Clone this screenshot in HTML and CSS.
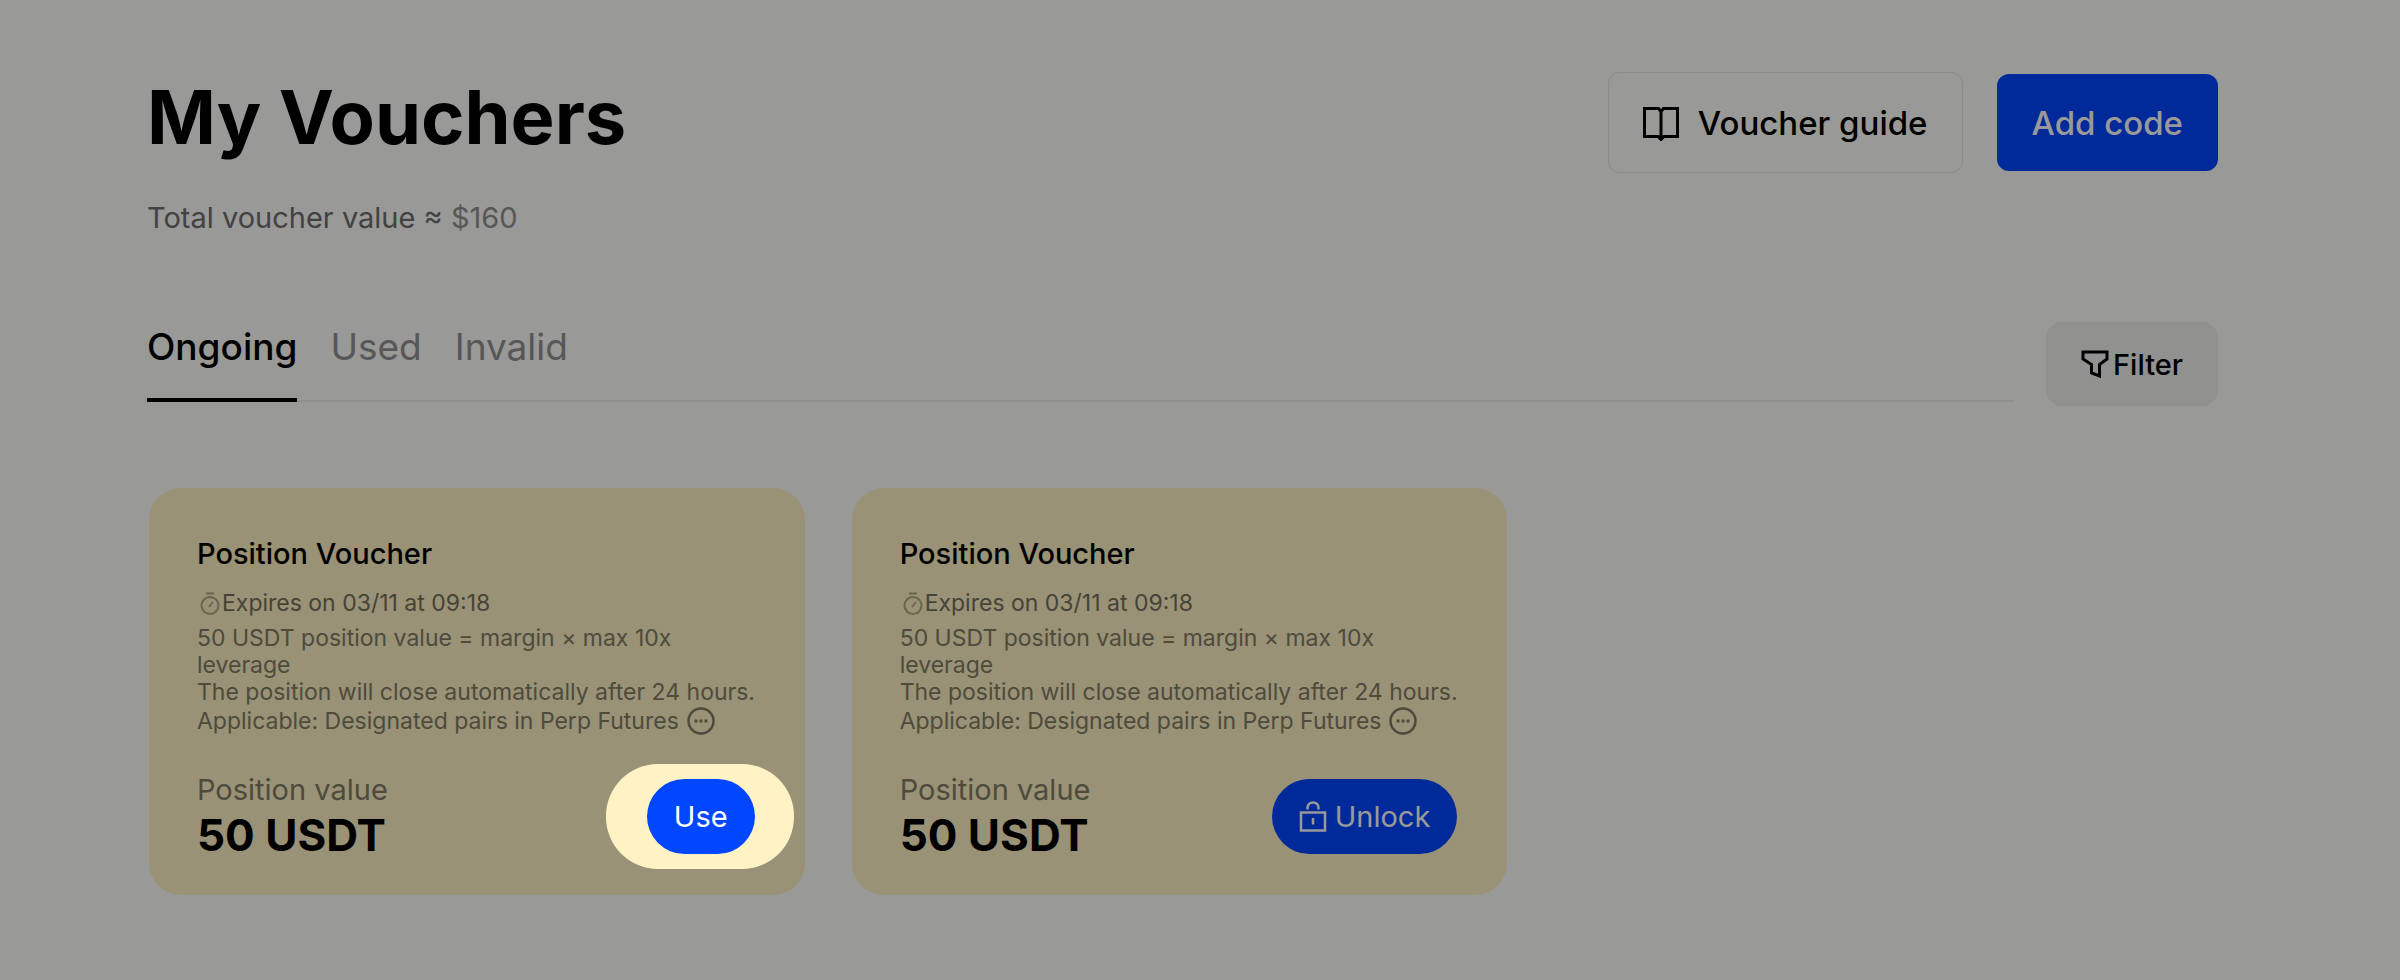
FILE: index.html
```html
<!DOCTYPE html>
<html lang="en">
<head>
  <meta charset="UTF-8">
  <meta name="viewport" content="width=device-width, initial-scale=1">
  <title>My Vouchers</title>
  <link rel="stylesheet" href="styles.css">
</head>
<body>

  <main class="page">
    <header class="header">
      <div>
        <h1 class="title">My Vouchers</h1>
        <p class="total">Total voucher value ≈ <span class="amount">$160</span></p>
      </div>
      <div class="actions">
        <a class="btn btn-outline" href="#guide">
          <svg class="icon-book" viewBox="0 0 36 36" fill="none" stroke="currentColor" stroke-width="3" aria-hidden="true">
            <path d="M18 6.5 15.5 3.5H1.5V31.5H15L18 34.5 21 31.5H34.5V3.5H20.5L18 6.5V33"/>
          </svg>
          Voucher guide
        </a>
        <button class="btn btn-primary" type="button">Add code</button>
      </div>
    </header>

    <div class="toolbar">
      <nav class="tabs">
        <a class="tab active" href="#ongoing">Ongoing</a>
        <a class="tab" href="#used">Used</a>
        <a class="tab" href="#invalid">Invalid</a>
      </nav>
      <button class="filter" type="button">
        <svg class="icon-filter" viewBox="0 0 28 28" fill="none" stroke="currentColor" stroke-width="3" aria-hidden="true">
          <path d="M2 2H26V9L18.5 14.5V26L10.5 23V14.5L2 9Z"/>
        </svg>
        Filter
      </button>
    </div>

    <section class="cards">
      <article class="card">
        <h2 class="card-title">Position Voucher</h2>
        <p class="expires">
          <svg class="icon-timer" viewBox="0 0 25 25" fill="none" stroke="currentColor" stroke-width="2" aria-hidden="true">
            <circle cx="13" cy="14.5" r="8.5"/>
            <path d="M9 2.5H17M12 16 16 11"/>
          </svg>
          Expires on 03/11 at 09:18
        </p>
        <p class="terms">50 USDT position value = margin × max 10x leverage</p>
        <p class="terms">The position will close automatically after 24 hours.</p>
        <p class="terms applicable">
          Applicable: Designated pairs in Perp Futures
          <svg class="icon-more" viewBox="0 0 28 28" aria-hidden="true">
            <circle cx="14" cy="14" r="12.5" fill="none" stroke="currentColor" stroke-width="2.5"/>
            <path d="M7.5 12.5h3v3h-3zM12.5 12.5h3v3h-3zM17.5 12.5h3v3h-3z" fill="currentColor"/>
          </svg>
        </p>
        <div class="card-bottom">
          <div>
            <div class="label">Position value</div>
            <div class="value">50 USDT</div>
          </div>
          <div class="spotlight">
            <button class="pill" type="button">Use</button>
          </div>
        </div>
      </article>

      <article class="card">
        <h2 class="card-title">Position Voucher</h2>
        <p class="expires">
          <svg class="icon-timer" viewBox="0 0 25 25" fill="none" stroke="currentColor" stroke-width="2" aria-hidden="true">
            <circle cx="13" cy="14.5" r="8.5"/>
            <path d="M9 2.5H17M12 16 16 11"/>
          </svg>
          Expires on 03/11 at 09:18
        </p>
        <p class="terms">50 USDT position value = margin × max 10x leverage</p>
        <p class="terms">The position will close automatically after 24 hours.</p>
        <p class="terms applicable">
          Applicable: Designated pairs in Perp Futures
          <svg class="icon-more" viewBox="0 0 28 28" aria-hidden="true">
            <circle cx="14" cy="14" r="12.5" fill="none" stroke="currentColor" stroke-width="2.5"/>
            <path d="M7.5 12.5h3v3h-3zM12.5 12.5h3v3h-3zM17.5 12.5h3v3h-3z" fill="currentColor"/>
          </svg>
        </p>
        <div class="card-bottom">
          <div>
            <div class="label">Position value</div>
            <div class="value">50 USDT</div>
          </div>
          <button class="pill" type="button">
            <svg class="icon-lock" viewBox="0 0 28 32" fill="none" stroke="currentColor" stroke-width="2.5" aria-hidden="true">
              <path d="M2 12.5H26V30.5H2ZM14 18V24.5M8.5 9.5V8C8.5 0.5 19.5 0.5 19.5 8V9.5"/>
            </svg>
            Unlock
          </button>
        </div>
      </article>
    </section>
  </main>

</body>
</html>
```
FILE: styles.css
```css
* {
  box-sizing: border-box;
}

body {
  margin: 0;
  min-height: 100vh;
  background: #fffffc;
  color: #000;
  font-family: Inter, 'Liberation Sans', sans-serif;
}

h1, h2, p {
  margin: 0;
}

a {
  color: inherit;
  text-decoration: none;
}

button {
  border: none;
  color: inherit;
  font-family: inherit;
  cursor: pointer;
}

svg {
  flex: none;
}

.page {
  padding: 72px 182px 80px 147px;
}

/* Header */
.header {
  display: flex;
  justify-content: space-between;
  align-items: flex-start;
}

.title {
  font-size: 74px;
  font-weight: 700;
  line-height: 90px;
}

.total {
  margin-top: 36px;
  font-size: 29px;
  line-height: 40px;
  color: #6e6e6e;
}

.amount {
  color: #929290;
}

.actions {
  display: flex;
  align-items: center;
  gap: 34px;
}

.btn {
  display: flex;
  align-items: center;
  font-size: 33px;
  font-weight: 500;
  border-radius: 12px;
}

.btn-outline {
  gap: 19px;
  height: 101px;
  padding: 0 34px;
  border: 1px solid #e6e6e6;
}

.btn-primary {
  height: 97px;
  padding: 0 35px;
  background: #0047ff;
  color: #fff;
}

.icon-book {
  width: 36px;
  height: 36px;
}

/* Tabs and filter */
.toolbar {
  display: flex;
  align-items: flex-end;
  gap: 32px;
  margin-top: 84px;
}

.tabs {
  flex: 1;
  display: flex;
  gap: 33px;
  margin-bottom: 4px;
  border-bottom: 2px solid #efefef;
}

.tab {
  height: 78px;
  margin-bottom: -2px;
  font-size: 37px;
  line-height: 46px;
  color: #929292;
}

.tab.active {
  border-bottom: 4px solid #000;
  font-weight: 500;
  color: #000;
}

.filter {
  display: flex;
  align-items: center;
  gap: 4px;
  height: 84px;
  padding: 0 35px;
  border-radius: 16px;
  background: #f2f2f0;
  font-size: 29px;
  font-weight: 500;
}

.icon-filter {
  width: 28px;
  height: 28px;
}

/* Voucher cards */
.cards {
  display: grid;
  grid-template-columns: repeat(3, 1fr);
  gap: 47px;
  margin: 82px 8px 0 2px;
}

.card {
  padding: 48px 48px 34px;
  border-radius: 32px;
  background: #fff3c5;
}

.card-title {
  font-size: 29px;
  font-weight: 500;
  line-height: 36px;
}

.expires {
  display: flex;
  align-items: center;
  margin: 17px 0 8px;
  font-size: 23px;
  line-height: 28px;
  color: #76715a;
}

.icon-timer {
  width: 25px;
  height: 25px;
  color: #b0a988;
}

.terms {
  font-size: 23px;
  line-height: 27px;
  color: #837d64;
}

.applicable {
  display: flex;
  align-items: center;
  gap: 8px;
  margin-top: 1px;
}

.icon-more {
  width: 28px;
  height: 28px;
}

.card-bottom {
  display: flex;
  justify-content: space-between;
  align-items: center;
  margin-top: 36px;
  padding-right: 2px;
}

.label {
  font-size: 29px;
  line-height: 38px;
  color: #837d64;
}

.value {
  font-size: 44px;
  font-weight: 700;
  line-height: 52px;
}

.pill {
  display: flex;
  align-items: center;
  gap: 8px;
  height: 75px;
  padding: 0 27px;
  border-radius: 38px;
  background: #0047ff;
  color: #fff;
  font-size: 29px;
}

.icon-lock {
  width: 28px;
  height: 32px;
}

/* Dims the whole page except the area around the button */
.spotlight {
  position: relative;
  z-index: 1;
}

.spotlight::before {
  content: '';
  position: absolute;
  z-index: -1;
  inset: -15px -39px -15px -41px;
  border-radius: 52px;
  background: #fff3c5;
  box-shadow: 0 0 0 3000px rgba(0, 0, 0, 0.4);
}
```
